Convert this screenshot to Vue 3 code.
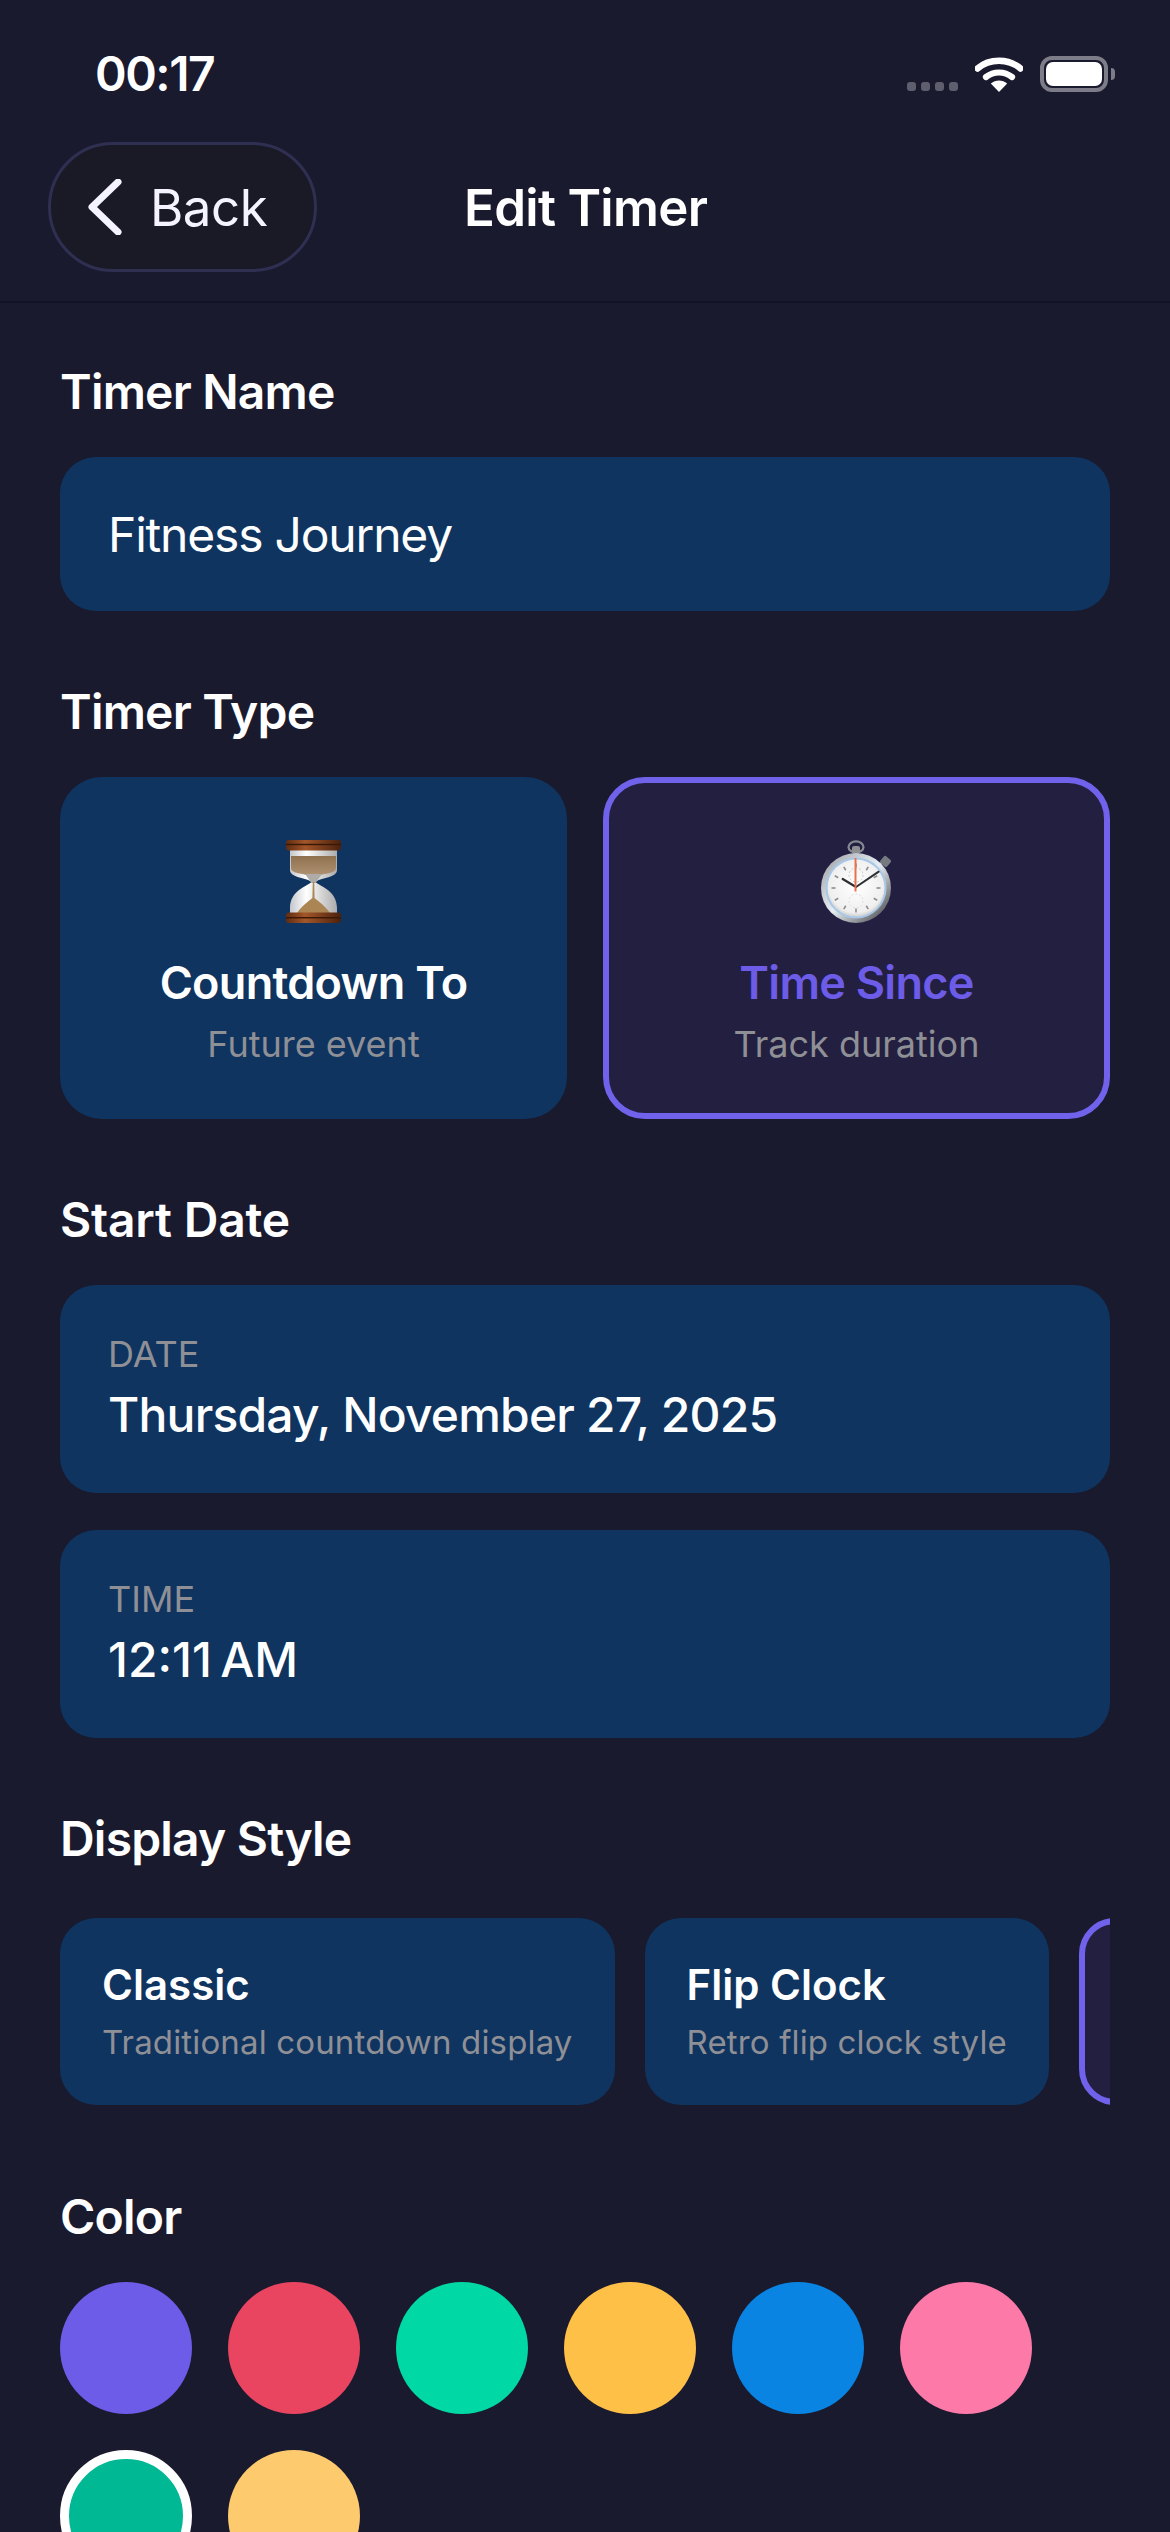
<template>
  <div class="screen">
    <div class="status-bar">
      <span class="clock">00:17</span>
      <div class="status-icons">
        <div class="signal">
          <i v-for="n in 4" :key="n"></i>
        </div>
        <svg class="wifi" width="48" height="35" viewBox="0 0 48 35">
          <path d="M2.5 11.5C14.5 1.2 33.5 1.2 45.5 11.5" fill="none" stroke="#fff" stroke-width="6.4" stroke-linecap="round" />
          <path d="M11 20C18.5 14 29.5 14 37 20" fill="none" stroke="#fff" stroke-width="6.2" stroke-linecap="round" />
          <path d="M15.8 26.6C20.6 22.4 27.4 22.4 32.2 26.6L24 35Z" fill="#fff" />
        </svg>
        <div class="battery"><span></span></div>
      </div>
    </div>

    <header class="nav">
      <button class="back">
        <svg width="36" height="56" viewBox="0 0 36 56">
          <path d="M31 3L5 28L31 53" fill="none" stroke="#f4f3ff" stroke-width="7" stroke-linecap="round" stroke-linejoin="round" />
        </svg>
        <span>Back</span>
      </button>
      <h1>Edit Timer</h1>
    </header>

    <main class="content">
      <section>
        <h2>Timer Name</h2>
        <div class="input">Fitness Journey</div>
      </section>

      <section>
        <h2>Timer Type</h2>
        <div class="types">
          <div class="type-card">
            <svg class="emoji" width="57" height="83" viewBox="0 0 57 83">
              <defs>
                <linearGradient id="wood" x1="0" x2="1" y1="0" y2="0">
                  <stop offset="0" stop-color="#5f2c12" />
                  <stop offset="0.35" stop-color="#a3562a" />
                  <stop offset="1" stop-color="#4a210c" />
                </linearGradient>
                <linearGradient id="glass" x1="0" x2="1" y1="0" y2="0">
                  <stop offset="0" stop-color="#c4c6cc" />
                  <stop offset="0.35" stop-color="#ffffff" />
                  <stop offset="1" stop-color="#adabab" />
                </linearGradient>
                <linearGradient id="sand" x1="0" x2="0" y1="0" y2="1">
                  <stop offset="0" stop-color="#8f7150" />
                  <stop offset="1" stop-color="#b09372" />
                </linearGradient>
              </defs>
              <path d="M5 10H52V30C52 38 34 38 30.5 42C34 46 52 50 52 68V74H5V68C5 50 23 46 26.5 42C23 38 5 38 5 30Z" fill="url(#glass)" />
              <path d="M6 16H51V28C51 34 38 33 34 36H23C19 33 6 34 6 28Z" fill="url(#sand)" />
              <path d="M20 34H37L30.5 43H26.5Z" fill="#aeaba8" />
              <path d="M27.8 42H29.2L29.6 58C37 64 42 68 45 73H12C15 68 21 63 27.4 58Z" fill="#ab8654" />
              <rect x="1" y="0" width="55" height="10.5" rx="3" fill="url(#wood)" />
              <rect x="1" y="3.8" width="55" height="1.4" fill="#3a1806" />
              <rect x="1" y="72.5" width="55" height="10.5" rx="3" fill="url(#wood)" />
              <rect x="1" y="77" width="55" height="1.4" fill="#3a1806" />
            </svg>
            <div class="type-title">Countdown To</div>
            <div class="type-sub">Future event</div>
          </div>
          <div class="type-card selected">
            <svg class="emoji" width="71" height="83" viewBox="0 0 71 83">
              <defs>
                <linearGradient id="rim" x1="0" x2="1" y1="0" y2="1">
                  <stop offset="0" stop-color="#9a9ca0" />
                  <stop offset="0.5" stop-color="#e6eef5" />
                  <stop offset="1" stop-color="#333335" />
                </linearGradient>
                <radialGradient id="dial" cx="0.5" cy="0.45" r="0.6">
                  <stop offset="0" stop-color="#ffffff" />
                  <stop offset="0.8" stop-color="#efefef" />
                  <stop offset="1" stop-color="#bdbdbd" />
                </radialGradient>
              </defs>
              <ellipse cx="35" cy="7" rx="7.5" ry="5.6" fill="none" stroke="#868b92" stroke-width="2.2" />
              <rect x="31" y="6" width="8" height="8" rx="2" fill="#8d8f93" />
              <rect x="60" y="17" width="9" height="9" rx="2" transform="rotate(40 64.5 21.5)" fill="#767a80" />
              <circle cx="35" cy="48" r="35" fill="url(#rim)" />
              <circle cx="35" cy="48" r="30.5" fill="#a8c8e6" />
              <circle cx="35" cy="48" r="28.5" fill="url(#dial)" />
              <g stroke="#8d8d8d" stroke-width="1.6">
                <line v-for="a in ticks" :key="a" x1="35" y1="23.5" x2="35" y2="27.5" :transform="`rotate(${a} 35 48)`" />
              </g>
              <circle cx="35" cy="35" r="7" fill="none" stroke="#c8c8c8" stroke-width="1" stroke-dasharray="2 2" />
              <circle cx="35" cy="61" r="7" fill="none" stroke="#dddddd" stroke-width="1" stroke-dasharray="2 2" />
              <path d="M35 47L21.7 39" stroke="#2c2f33" stroke-width="2.2" stroke-linecap="round" />
              <path d="M35 47L57.7 31.7" stroke="#2c2f33" stroke-width="2" stroke-linecap="round" />
              <path d="M34.5 18V51.5" stroke="#e8704a" stroke-width="2" />
            </svg>
            <div class="type-title">Time Since</div>
            <div class="type-sub">Track duration</div>
          </div>
        </div>
      </section>

      <section>
        <h2 class="start-title">Start Date</h2>
        <div class="date-card">
          <div class="date-label">DATE</div>
          <div class="date-value">Thursday, November 27, 2025</div>
        </div>
        <div class="date-card">
          <div class="date-label">TIME</div>
          <div class="date-value time-value">12:11&#8239;AM</div>
        </div>
      </section>

      <section class="style-section">
        <h2>Display Style</h2>
        <div class="styles">
          <div
            v-for="s in displayStyles"
            :key="s.title"
            class="style-card"
            :class="{ selected: s.selected }"
          >
            <div class="style-title">{{ s.title }}</div>
            <div class="style-sub">{{ s.sub }}</div>
          </div>
        </div>
      </section>

      <section>
        <h2>Color</h2>
        <div class="colors">
          <div
            v-for="c in colors"
            :key="c"
            class="swatch"
            :class="{ active: c === activeColor }"
            :style="{ backgroundColor: c }"
          ></div>
        </div>
      </section>
    </main>
  </div>
</template>

<script setup>
const ticks = Array.from({ length: 12 }, (_, i) => i * 30)

const displayStyles = [
  { title: 'Classic', sub: 'Traditional countdown display' },
  { title: 'Flip Clock', sub: 'Retro flip clock style' },
  { title: '', sub: '', selected: true },
]

const colors = ['#6c5ce7', '#e94560', '#00d9a5', '#ffc048', '#0984e3', '#fd79a8', '#00b894', '#fdcb6e']
const activeColor = '#00b894'
</script>

<style>
html, body {
  margin: 0;
  background: #1a1a2e;
}
</style>

<style scoped>
.screen {
  width: 1170px;
  height: 2532px;
  overflow: hidden;
  background: #1a1a2e;
  color: #fff;
  font-family: Inter, "Liberation Sans", sans-serif;
}

.status-bar {
  height: 142px;
  box-sizing: border-box;
  padding: 48px 62px 0 95px;
  display: flex;
  justify-content: space-between;
  align-items: flex-start;
}

.clock {
  font-size: 48px;
  font-weight: 600;
  line-height: 52px;
  letter-spacing: -1.5px;
}

.status-icons {
  display: flex;
  align-items: flex-end;
  margin-top: 8px;
}

.signal {
  display: flex;
  gap: 5px;
  margin-right: 17px;
  margin-bottom: 1px;
}

.signal i {
  width: 9px;
  height: 9px;
  border-radius: 3px;
  background: #5e5e6e;
}

.battery {
  width: 68px;
  height: 36px;
  margin-left: 17px;
  box-sizing: border-box;
  border: 4px solid #7d7d8a;
  border-radius: 12px;
  padding: 2px;
  position: relative;
}

.battery span {
  display: block;
  height: 100%;
  background: #fff;
  border-radius: 7px;
}

.battery::after {
  content: "";
  position: absolute;
  right: -11px;
  top: 8px;
  width: 4px;
  height: 12px;
  background: #7d7d8a;
  border-radius: 0 4px 4px 0;
}

.nav {
  height: 161px;
  box-sizing: border-box;
  padding: 0 48px 29px;
  border-bottom: 2px solid #131327;
  display: flex;
  align-items: center;
  gap: 147px;
}

.back {
  width: 269px;
  height: 130px;
  box-sizing: border-box;
  border: 3px solid #2f2f52;
  border-radius: 65px;
  background: #1a1a26;
  color: #f4f3ff;
  font-family: inherit;
  font-size: 51px;
  letter-spacing: -0.5px;
  display: flex;
  align-items: center;
  gap: 27px;
  padding: 0 0 0 36px;
}

.nav h1 {
  margin: 0;
  font-size: 51px;
  font-weight: 600;
  letter-spacing: -0.7px;
}

.content {
  padding: 60px 60px 0;
  display: flex;
  flex-direction: column;
  gap: 72px;
}

h2 {
  margin: 0 0 36px;
  font-size: 48px;
  line-height: 58px;
  font-weight: 600;
  letter-spacing: -0.8px;
}

h2.start-title {
  letter-spacing: -0.2px;
}

.input {
  height: 154px;
  box-sizing: border-box;
  background: #0f3460;
  border-radius: 36px;
  padding: 0 48px;
  display: flex;
  align-items: center;
  font-size: 48px;
  letter-spacing: -1.2px;
}

.types {
  display: grid;
  grid-template-columns: 1fr 1fr;
  gap: 36px;
}

.type-card {
  height: 342px;
  box-sizing: border-box;
  border: 6px solid transparent;
  border-radius: 42px;
  background: #0f3460;
  padding-top: 57px;
  display: flex;
  flex-direction: column;
  align-items: center;
}

.type-card.selected {
  border-color: #7062ea;
  background: #231f41;
}

.emoji {
  display: block;
}

.type-title {
  margin-top: 31px;
  font-size: 45px;
  line-height: 58px;
  font-weight: 600;
  letter-spacing: -0.7px;
}

.selected .type-title {
  color: #6c5ce7;
}

.type-sub {
  margin-top: 10px;
  font-size: 36px;
  line-height: 44px;
  color: #8f8f96;
}

.date-card {
  height: 208px;
  box-sizing: border-box;
  background: #0f3460;
  border-radius: 36px;
  padding: 0 48px;
  display: flex;
  flex-direction: column;
  justify-content: center;
  margin-bottom: 37px;
}

.date-card:last-child {
  margin-bottom: 0;
}

.date-label {
  margin-top: -2px;
  font-size: 36px;
  line-height: 44px;
  color: #8f8f96;
}

.date-value {
  margin-top: 10px;
  font-size: 48px;
  line-height: 58px;
  font-weight: 500;
  letter-spacing: -0.8px;
}

.date-value.time-value {
  letter-spacing: 0;
}

.style-section h2 {
  margin-bottom: 50px;
}

.styles {
  display: flex;
  gap: 30px;
  overflow: hidden;
  margin-bottom: 11px;
}

.style-card {
  flex: none;
  height: 187px;
  box-sizing: border-box;
  background: #0f3460;
  border-radius: 36px;
  padding: 41px 42px 0;
}

.style-card.selected {
  width: 400px;
  border: 6px solid #7062ea;
  background: #231f41;
}

.style-title {
  font-size: 42px;
  line-height: 52px;
  font-weight: 600;
}

.style-sub {
  margin-top: 8px;
  font-size: 33px;
  line-height: 46px;
  letter-spacing: 0.15px;
  color: #8f8f96;
}

.colors {
  display: flex;
  flex-wrap: wrap;
  gap: 36px;
}

.swatch {
  width: 132px;
  height: 132px;
  box-sizing: border-box;
  border-radius: 50%;
}

.swatch.active {
  border: 9px solid #fff;
}
</style>
